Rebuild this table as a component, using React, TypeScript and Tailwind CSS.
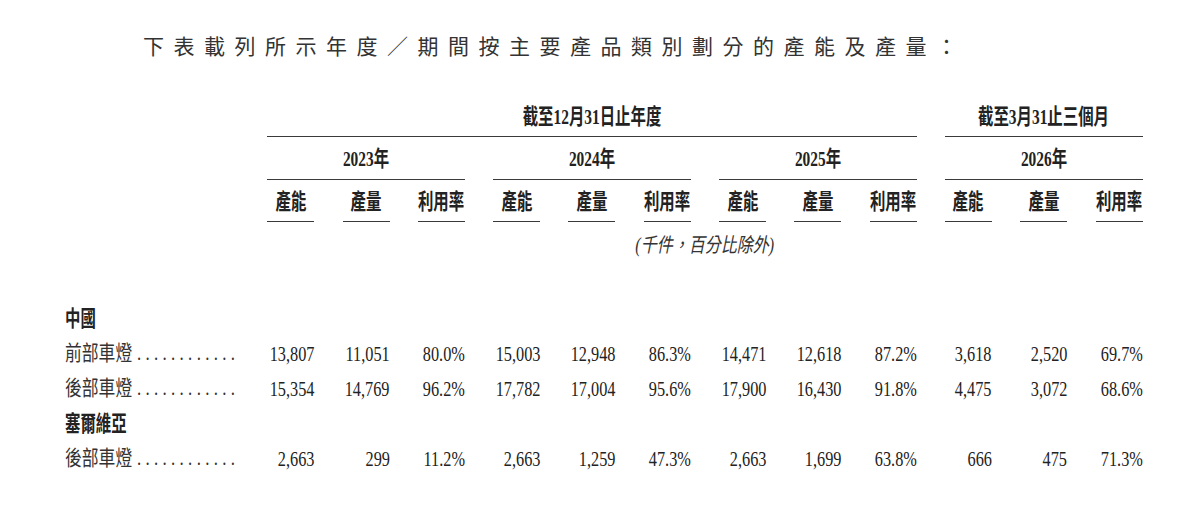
const FONT = "font-['Liberation_Serif','Noto_Sans_CJK_TC',serif]";
const GRID = "grid grid-cols-[174px_repeat(12,47px)] gap-x-[28.3px]";
const LINE = "border-b-[1.5px] border-[#3a3a3a]";

type Row = { label: string; values: string[] };
type Section = { name: string; rows: Row[] };

const sections: Section[] = [
  {
    name: "中國",
    rows: [
      {
        label: "前部車燈",
        values: ["13,807", "11,051", "80.0%", "15,003", "12,948", "86.3%", "14,471", "12,618", "87.2%", "3,618", "2,520", "69.7%"],
      },
      {
        label: "後部車燈",
        values: ["15,354", "14,769", "96.2%", "17,782", "17,004", "95.6%", "17,900", "16,430", "91.8%", "4,475", "3,072", "68.6%"],
      },
    ],
  },
  {
    name: "塞爾維亞",
    rows: [
      {
        label: "後部車燈",
        values: ["2,663", "299", "11.2%", "2,663", "1,259", "47.3%", "2,663", "1,699", "63.8%", "666", "475", "71.3%"],
      },
    ],
  },
];

const years = ["2023年", "2024年", "2025年", "2026年"];
const heads = ["產能", "產量", "利用率"];

function Cond({ children }: { children: React.ReactNode }) {
  return <span className="inline-block shrink-0 whitespace-nowrap scale-x-[0.7] font-bold text-[22px]">{children}</span>;
}

export default function App() {
  return (
    <div className={`w-[1191px] h-[510px] overflow-hidden bg-white text-[#222] ${FONT}`}>
      <p className="pt-[30px] pl-[143px] text-[21px] leading-[30px] tracking-[9.5px] text-[#333] whitespace-nowrap font-['Noto_Sans_CJK_TC',sans-serif]">
        下表載列所示年度／期間按主要產品類別劃分的產能及產量：
      </p>

      <div className="mt-[46px] pl-[65px]">
        {/* period headers */}
        <div className={GRID}>
          <div className={`col-start-2 col-span-9 flex justify-center pb-[8px] leading-[22px] ${LINE}`}>
            <Cond>截至12月31日止年度</Cond>
          </div>
          <div className={`col-span-3 flex justify-center pb-[8px] leading-[22px] ${LINE}`}>
            <Cond>截至3月31止三個月</Cond>
          </div>
        </div>

        <div className={GRID}>
          {years.map((y, i) => (
            <div
              key={y}
              className={`${i === 0 ? "col-start-2" : ""} col-span-3 flex justify-center pt-[11px] pb-[9px] leading-[22px] ${LINE}`}
            >
              <Cond>{y}</Cond>
            </div>
          ))}
        </div>

        <div className={GRID}>
          {years.flatMap((y, i) =>
            heads.map((h, j) => (
              <div
                key={y + h}
                className={`${i === 0 && j === 0 ? "col-start-2" : ""} flex justify-center pt-[11px] pb-[8px] leading-[22px] ${LINE}`}
              >
                <Cond>{h}</Cond>
              </div>
            ))
          )}
        </div>

        <div className={GRID}>
          <div className="col-start-2 col-span-12 pt-[12px] text-center leading-[22px]">
            <span className="inline-block scale-x-[0.8] italic text-[20px] text-[#333]">(千件，百分比除外)</span>
          </div>
        </div>

        <div className="mt-[43px]">
          {sections.map((s) => (
            <div key={s.name}>
              <div className="h-[35px] leading-[35px]">
                <span className="inline-block origin-left scale-x-[0.7] font-bold text-[22px]">{s.name}</span>
              </div>
              {s.rows.map((r, k) => (
                <div key={k} className={`${GRID} h-[35px] leading-[35px]`}>
                  <div className="whitespace-nowrap text-[#333]">
                    <span className="inline-block origin-left scale-x-[0.8] text-[21px]">
                      {r.label}
                      <span className="ml-[6px] tracking-[5.4px]">............</span>
                    </span>
                  </div>
                  {r.values.map((v, i) => (
                    <div key={i} className="flex justify-end">
                      <span className="inline-block shrink-0 whitespace-nowrap origin-right scale-x-[0.74] text-[22px]">{v}</span>
                    </div>
                  ))}
                </div>
              ))}
            </div>
          ))}
        </div>
      </div>
    </div>
  );
}
